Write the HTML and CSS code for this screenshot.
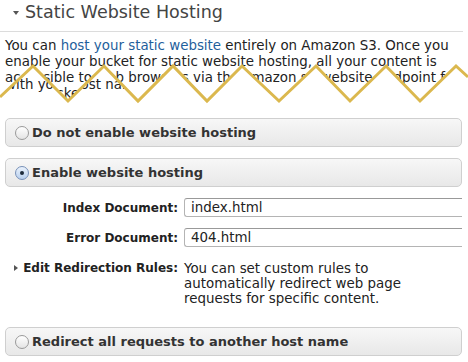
FILE: index.html
```html
<!DOCTYPE html>
<html lang="en">
<head>
    <meta charset="UTF-8">
    <title>Static Website Hosting</title>
    <link rel="stylesheet" href="styles.css">
</head>
<body>
    <div class="panel">
        <h2 class="panel-title"><span class="caret-down"></span>Static Website Hosting</h2>

        <p class="intro">You can <a href="#">host your static website</a> entirely on Amazon S3. Once you enable your bucket for static website hosting, all your content is accessible to web browsers via the amazon s3 website endpoint for your bucket.</p>

        <!-- torn edge over the intro text -->
        <div class="tear">with your host name.</div>
        <svg class="tear-line" width="468" height="55" viewBox="0 0 468 55">
            <polyline points="0,37 33,6 68,41 104,6 138,41 173,6 207,41 242,6 279,41 316,6 350,41 386,6 420,41 456,6 468,17"
                      fill="none" stroke="#dbb84e" stroke-width="3" stroke-linejoin="miter"/>
        </svg>

        <div class="option">
            <span class="radio"></span>Do not enable website hosting
        </div>

        <div class="option">
            <span class="radio checked"></span>Enable website hosting
        </div>

        <div class="form-grid">
            <label>Index Document:</label>
            <input type="text" value="index.html">

            <label>Error Document:</label>
            <input type="text" value="404.html">

            <label class="expand"><span class="caret-right"></span><span>Edit Redirection Rules:</span></label>
            <p class="hint">You can set custom rules to automatically redirect web page requests for specific content.</p>
        </div>

        <div class="option last">
            <span class="radio"></span>Redirect all requests to another host name
        </div>
    </div>
</body>
</html>
```

FILE: styles.css
```css
* {
    margin: 0;
    padding: 0;
    box-sizing: border-box;
}

body {
    background: white;
    font-family: 'DejaVu Sans', Verdana, sans-serif;
    color: #222;
    width: 468px;
    overflow: hidden;
}

.panel {
    position: relative;
    height: 362px;
}

.panel-title {
    display: flex;
    align-items: center;
    height: 32px;
    padding: 0 0 7px 13px;
    margin-right: 5px;
    border-bottom: 1px solid #dcdcdc;
    font-size: 17.5px;
    font-weight: normal;
    color: #444;
}

.caret-down {
    width: 0;
    height: 0;
    border-left: 3.5px solid transparent;
    border-right: 3.5px solid transparent;
    border-top: 4px solid #555;
    margin-right: 6px;
    margin-top: 1px;
}

.intro {
    padding: 6px 5px 0 5px;
    font-size: 13.4px;
    line-height: 16px;
    height: 86px;
    overflow: hidden;
}

.intro a {
    color: #1f5f9c;
    text-decoration: none;
}

.tear {
    position: absolute;
    top: 60px;
    left: 0;
    width: 468px;
    height: 55px;
    background: white;
    padding: 17px 0 0 5px;
    font-size: 13.4px;
    line-height: 16px;
    clip-path: polygon(0 37px, 33px 6px, 68px 41px, 104px 6px, 138px 41px, 173px 6px, 207px 41px, 242px 6px, 279px 41px, 316px 6px, 350px 41px, 386px 6px, 420px 41px, 456px 6px, 468px 17px, 468px 55px, 0 55px);
}

.tear-line {
    position: absolute;
    top: 60px;
    left: 0;
}

.option {
    display: flex;
    align-items: center;
    height: 29px;
    margin: 0 6px 11px 5px;
    padding-left: 9px;
    border: 1px solid #cfcfcf;
    border-radius: 5px;
    background: linear-gradient(#f7f7f7, #e8e8e8);
    font-size: 13px;
    font-weight: bold;
    color: #333;
}

.option.last {
    margin-top: 21px;
}

.radio {
    width: 14px;
    height: 14px;
    margin-right: 3px;
    border: 1px solid #9a9a9a;
    border-radius: 50%;
    background: linear-gradient(#ffffff, #e4e4e4);
}

.radio.checked {
    position: relative;
    border-color: #7790b8;
    background: linear-gradient(#eaf2fc, #b9d0ee);
}

.radio.checked::after {
    content: "";
    position: absolute;
    top: 4px;
    left: 4px;
    width: 4px;
    height: 4px;
    border-radius: 50%;
    background: #1d2a3a;
}

.form-grid {
    display: grid;
    grid-template-columns: 178px 1fr;
    column-gap: 6px;
    row-gap: 11px;
    margin: 10px 6px 0 0;
    align-items: center;
}

.form-grid label {
    text-align: right;
    font-size: 12px;
    font-weight: bold;
    color: #222;
    white-space: nowrap;
}

.form-grid input {
    height: 19px;
    border: 1px solid #b4b4b4;
    border-top-color: #999;
    border-right: none;
    border-radius: 3px 0 0 3px;
    padding-left: 6px;
    font-family: inherit;
    font-size: 13.4px;
    color: #222;
}

.form-grid .expand {
    display: flex;
    align-items: center;
    justify-content: space-between;
    align-self: start;
    padding-left: 14px;
    margin-top: 3px;
}

.caret-right {
    width: 0;
    height: 0;
    border-top: 3px solid transparent;
    border-bottom: 3px solid transparent;
    border-left: 4px solid #555;
}

.hint {
    margin-top: 3px;
    width: 262px;
    font-size: 13.4px;
    line-height: 15px;
    color: #222;
}
```
